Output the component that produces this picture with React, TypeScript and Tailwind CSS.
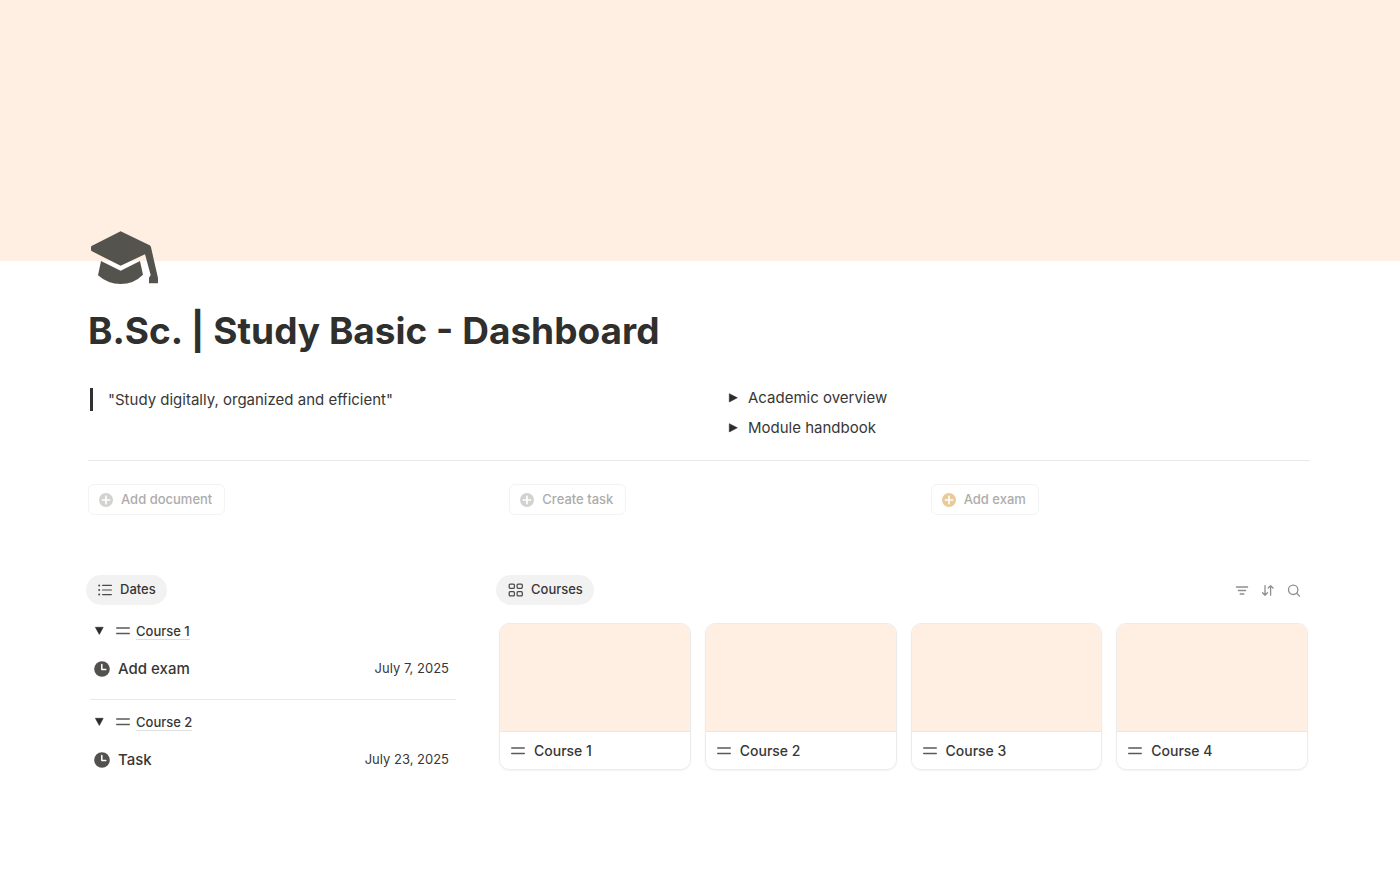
import type { ReactNode } from "react";

const dates = [
  { course: "Course 1", title: "Add exam", date: "July 7, 2025" },
  { course: "Course 2", title: "Task", date: "July 23, 2025" },
];

const courses = ["Course 1", "Course 2", "Course 3", "Course 4"];

const actions = [
  { label: "Add document", color: "text-[#d2d2d0]" },
  { label: "Create task", color: "text-[#d2d2d0]" },
  { label: "Add exam", color: "text-[#e8cb98]" },
];

function GraduationCap() {
  return (
    <svg
      width="69"
      height="54"
      viewBox="63 47 207 162"
      fill="#55534e"
      aria-hidden="true"
    >
      <path d="M149 49Q152 47 155 49L239 90Q242 92 243 96L264 188V204H237V187L242 179L225 117L155 150Q152 152 149 150L66 108Q63 107 63 104V95Q63 92 66 91Z" />
      <path d="M93 137L152 166L210 137L219 178Q191 206 152 206Q113 206 84 180Z" />
    </svg>
  );
}

function PlusCircle() {
  return (
    <svg width="14" height="14" viewBox="0 0 14 14" aria-hidden="true">
      <circle cx="7" cy="7" r="7" fill="currentColor" />
      <path
        d="M7 3.4V10.6M3.4 7H10.6"
        stroke="#fff"
        strokeWidth="1.7"
        strokeLinecap="round"
      />
    </svg>
  );
}

function Clock() {
  return (
    <svg width="16" height="16" viewBox="0 0 16 16" aria-hidden="true">
      <circle cx="8" cy="8" r="7.8" fill="#52514e" />
      <path
        d="M7.8 3.6V8.4H11.8"
        fill="none"
        stroke="#fff"
        strokeWidth="1.5"
        strokeLinecap="round"
        strokeLinejoin="round"
      />
    </svg>
  );
}

function Lines() {
  return (
    <svg
      width="14"
      height="10"
      viewBox="0 0 14 10"
      className="shrink-0"
      aria-hidden="true"
    >
      <path
        d="M0.8 2H13.2M0.8 7.5H13.2"
        stroke="#5b5a57"
        strokeWidth="1.6"
        strokeLinecap="round"
      />
    </svg>
  );
}

function Triangle({ down = false }: { down?: boolean }) {
  return (
    <svg width="10" height="10" viewBox="0 0 10 10" aria-hidden="true">
      <path
        d={down ? "M1.4 1.3H9.2L5.3 8.4Z" : "M1.3 0.7L9.3 4.8L1.3 8.9Z"}
        fill="#2c2c2b"
        stroke="#2c2c2b"
        strokeWidth="0.6"
        strokeLinejoin="round"
      />
    </svg>
  );
}

function ListIcon() {
  return (
    <svg width="14" height="12" viewBox="0 0 14 12" aria-hidden="true">
      <path
        d="M4.6 1.4H13.4M4.6 6H13.4M4.6 10.6H13.4"
        stroke="#4b4a48"
        strokeWidth="1.2"
        strokeLinecap="round"
      />
      <g fill="#4b4a48">
        <circle cx="1.2" cy="1.4" r="1" />
        <circle cx="1.2" cy="6" r="1" />
        <circle cx="1.2" cy="10.6" r="1" />
      </g>
    </svg>
  );
}

function GalleryIcon() {
  return (
    <svg
      width="15"
      height="14"
      viewBox="0 0 15 14"
      fill="none"
      stroke="#4b4a48"
      strokeWidth="1.25"
      aria-hidden="true"
    >
      <rect x="1.2" y="1.1" width="5.2" height="4.2" rx="1" />
      <rect x="9.1" y="1.1" width="5.2" height="4.2" rx="1" />
      <rect x="1.2" y="8.7" width="5.2" height="4.2" rx="1" />
      <rect x="9.1" y="8.7" width="5.2" height="4.2" rx="1" />
    </svg>
  );
}

function ToolButton({ label, children }: { label: string; children: ReactNode }) {
  return (
    <button aria-label={label} className="p-1">
      <svg
        width="14"
        height="14"
        viewBox="0 0 14 14"
        fill="none"
        stroke="#8f8e8b"
        strokeWidth="1.3"
        strokeLinecap="round"
        strokeLinejoin="round"
        aria-hidden="true"
      >
        {children}
      </svg>
    </button>
  );
}

function ViewTab({ icon, label }: { icon: ReactNode; label: string }) {
  return (
    <button className="flex h-[30px] items-center gap-2 rounded-full bg-[#f2f2f2] pr-[11px] pl-3 text-[13px] font-medium">
      {icon}
      {label}
    </button>
  );
}

export default function App() {
  return (
    <div className="min-h-screen bg-white pb-10 font-[Inter,sans-serif] text-[#383736]">
      <div className="h-[261px] bg-[#ffeee2]" />

      <header className="relative -mt-[30px] pl-[91px]">
        <GraduationCap />
      </header>

      <main className="pt-[23px]">
        <div className="pr-[90px] pl-[88px]">
          <h1 className="text-[37px] leading-[46px] font-bold text-[#2f2f2e]">
            B.Sc. | Study Basic - Dashboard
          </h1>

          <div className="grid grid-cols-2 gap-[58px] pt-[29px]">
            <div className="pt-[5px] pl-[2px]">
              <blockquote className="border-l-[3px] border-[#323130] pl-[15px] text-[15px] leading-[23px]">
                "Study digitally, organized and efficient"
              </blockquote>
            </div>
            <div className="flex flex-col">
              {["Academic overview", "Module handbook"].map((label) => (
                <button
                  key={label}
                  className="flex h-[30px] items-center gap-[10px] text-[15px]"
                >
                  <Triangle />
                  {label}
                </button>
              ))}
            </div>
          </div>

          <hr className="mt-[17px] border-[#e8e8e8]" />

          <div className="grid grid-cols-3 gap-[42px] pt-[23px]">
            {actions.map(({ label, color }) => (
              <div key={label}>
                <button className="flex h-[31px] items-center gap-2 rounded-md border border-[#f3f3f3] pr-3 pl-[10px] text-[13px] font-medium text-[#adacab]">
                  <span className={color}>
                    <PlusCircle />
                  </span>
                  {label}
                </button>
              </div>
            ))}
          </div>
        </div>

        <div className="flex gap-10 pt-[60px] pr-[92px] pl-[86px]">
          <section className="w-[370px] shrink-0">
            <ViewTab icon={<ListIcon />} label="Dates" />
            <div className="divide-y divide-[#e8e8e8] pt-1 pl-1">
              {dates.map(({ course, title, date }) => (
                <div key={course} className="pt-[10px] pb-1">
                  <div className="flex h-6 items-center pl-1">
                    <button aria-label={`Toggle ${course}`}>
                      <Triangle down />
                    </button>
                    <a
                      href="#"
                      className="flex items-center gap-[6px] pl-3 text-[13px] font-medium"
                    >
                      <Lines />
                      <span className="border-b border-[#dedede] leading-[16px]">
                        {course}
                      </span>
                    </a>
                  </div>
                  <a
                    href="#"
                    className="flex h-[52px] items-center gap-2 pr-[7px] pl-1 text-[15px] font-medium"
                  >
                    <Clock />
                    {title}
                    <span className="ml-auto text-[13px] font-normal">
                      {date}
                    </span>
                  </a>
                </div>
              ))}
            </div>
          </section>

          <section className="min-w-0 flex-1">
            <div className="flex items-center justify-between">
              <ViewTab icon={<GalleryIcon />} label="Courses" />
              <div className="flex gap-1 pr-[3px]">
                <ToolButton label="Filter">
                  <path d="M1.4 4H12.6M3.4 7.5H10.6M5.2 11H8.8" />
                </ToolButton>
                <ToolButton label="Sort">
                  <path d="M4 2.6V12.2M1.6 9.8L4 12.2L6.4 9.8M9.6 12.2V2.6M7.2 5L9.6 2.6L12 5" />
                </ToolButton>
                <ToolButton label="Search">
                  <circle cx="6.2" cy="6.8" r="4.7" />
                  <path d="M9.7 10.2L12.6 13.1" />
                </ToolButton>
              </div>
            </div>
            <div className="grid grid-cols-4 gap-[14px] pt-[18px] pl-[3px]">
              {courses.map((name) => (
                <a
                  key={name}
                  href="#"
                  className="overflow-hidden rounded-[10px] border border-[#ececec] shadow-xs"
                >
                  <div className="h-[108px] border-b border-[#f3e5da] bg-[#ffeee2]" />
                  <div className="flex h-[37px] items-center gap-[9px] px-[11px] text-sm font-medium">
                    <Lines />
                    {name}
                  </div>
                </a>
              ))}
            </div>
          </section>
        </div>
      </main>
    </div>
  );
}
